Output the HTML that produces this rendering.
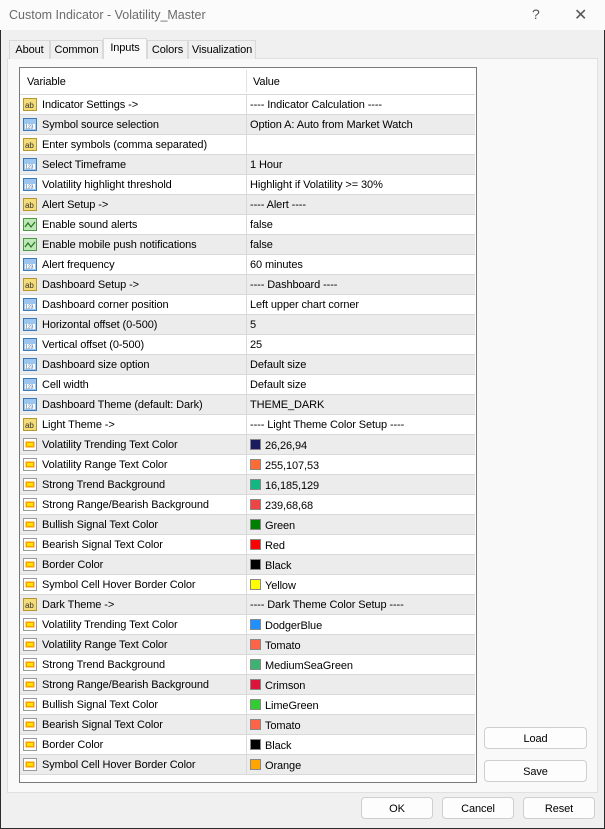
<!DOCTYPE html>
<html><head><style>
*{margin:0;padding:0;box-sizing:border-box}
body{width:605px;height:829px;background:#f0f0f0;font-family:"Liberation Sans",Arial,sans-serif;font-size:11px;letter-spacing:-0.1px;color:#000;position:relative;overflow:hidden}
.win{position:absolute;left:0;top:0;width:605px;height:829px;border:1px solid #2b2b2b;border-top:none}
.title{position:absolute;left:0;top:0;width:605px;height:30px;background:#fbfbfb}
.title span{position:absolute;left:9px;top:8px;font-size:12.5px;color:#6b6b6b;letter-spacing:0}
.tb{position:absolute;top:6px;font-size:14px;color:#555}
.tab{position:absolute;top:40px;height:19px;border:1px solid #d9d9d9;border-bottom:none;background:#f0f0f0;font-size:11px;padding-top:3px;text-align:center}
.panel{position:absolute;left:7px;top:58px;width:591px;height:735px;background:#f9f9f9;border:1px solid #e0e0e0}
.list{position:absolute;left:19px;top:67px;width:458px;height:716px;border:1px solid #7a7a7a;background:#fff;overflow:hidden}
.hdr{position:absolute;left:0;top:0;width:456px;height:25px}
.hdr span{position:absolute;top:8px}
.row{position:absolute;left:0;width:455px;height:20px;border-top:1px solid #d9d9d9}
.row.g{background:#ececec}
.row .n{position:absolute;left:22px;top:4px;white-space:nowrap}
.row .v{position:absolute;left:230px;top:4px;white-space:nowrap}
.row .sep{position:absolute;left:226px;top:0;height:20px;border-left:1px solid #d9d9d9}
.ic{position:absolute;left:3px;top:2px;width:15px;height:15px}
.sw{display:inline-block;width:11px;height:11px;border:1px solid #888;vertical-align:-1px;margin-right:4px}
.btn{position:absolute;height:22px;border:1px solid #cfcfcf;border-radius:4px;background:#fdfdfd;text-align:center;padding-top:5px;font-size:11px}
</style></head><body>
<div class="win"></div>
<div class="title"><span>Custom Indicator - Volatility_Master</span><div class="tb" style="left:532px">?</div><div class="tb" style="left:574px;font-size:16px;top:5px">✕</div></div>
<div class="panel"></div>
<div class="tab" style="left:9px;width:41px">About</div>
<div class="tab" style="left:50px;width:53px">Common</div>
<div class="tab" style="left:103px;width:44px;top:38px;height:21px;background:#f9f9f9;padding-top:3px">Inputs</div>
<div class="tab" style="left:147px;width:41px">Colors</div>
<div class="tab" style="left:188px;width:68px">Visualization</div>
<div class="list">
<div class="hdr"><span style="left:7px">Variable</span><span style="left:233px">Value</span><div style="position:absolute;left:226px;top:2px;height:22px;border-left:1px solid #e0e0e0"></div></div>
<div id="rows"></div>
</div>
<div class="btn" style="left:484px;top:727px;width:103px">Load</div>
<div class="btn" style="left:484px;top:760px;width:103px">Save</div>
<div class="btn" style="left:361px;top:797px;width:72px">OK</div>
<div class="btn" style="left:442px;top:797px;width:72px">Cancel</div>
<div class="btn" style="left:523px;top:797px;width:72px">Reset</div>
<script>
var ab='<svg class="ic" viewBox="0 0 15 15"><rect x="0.5" y="1.5" width="13" height="12" fill="#f3dc7a" stroke="#b8962e"/><text x="2" y="11" font-size="8" font-family="Liberation Sans" fill="#333">ab</text></svg>';
var n='<svg class="ic" viewBox="0 0 15 15"><rect x="0.5" y="1.5" width="13" height="12" fill="#9cc6ee" stroke="#3d78b8"/><rect x="2" y="7" width="10" height="5" fill="#fff"/><text x="2.3" y="11.5" font-size="5" font-family="Liberation Sans" fill="#1c4f8c">123</text></svg>';
var b='<svg class="ic" viewBox="0 0 15 15"><rect x="0.5" y="1.5" width="13" height="12" fill="#bfe8b8" stroke="#4c9a44"/><path d="M2 10 L5 6 L8 10 L12 5" stroke="#2d7a26" fill="none" stroke-width="1.3"/></svg>';
var c='<svg class="ic" viewBox="0 0 15 15"><rect x="0.5" y="1.5" width="13" height="12" fill="#fff" stroke="#999"/><rect x="2.5" y="4.5" width="9" height="6" fill="#f7a000"/><rect x="4" y="6" width="6" height="3" fill="#ffe000"/></svg>';
var R=[[ab,'Indicator Settings ->','---- Indicator Calculation ----'],[n,'Symbol source selection','Option A: Auto from Market Watch'],[ab,'Enter symbols (comma separated)',''],[n,'Select Timeframe','1 Hour'],[n,'Volatility highlight threshold','Highlight if Volatility >= 30%'],[ab,'Alert Setup ->','---- Alert ----'],[b,'Enable sound alerts','false'],[b,'Enable mobile push notifications','false'],[n,'Alert frequency','60 minutes'],[ab,'Dashboard Setup ->','---- Dashboard ----'],[n,'Dashboard corner position','Left upper chart corner'],[n,'Horizontal offset (0-500)','5'],[n,'Vertical offset (0-500)','25'],[n,'Dashboard size option','Default size'],[n,'Cell width','Default size'],[n,'Dashboard Theme (default: Dark)','THEME_DARK'],[ab,'Light Theme ->','---- Light Theme Color Setup ----'],
[c,'Volatility Trending Text Color','26,26,94','#1a1a5e'],[c,'Volatility Range Text Color','255,107,53','#ff6b35'],[c,'Strong Trend Background','16,185,129','#10b981'],[c,'Strong Range/Bearish Background','239,68,68','#ef4444'],[c,'Bullish Signal Text Color','Green','#008000'],[c,'Bearish Signal Text Color','Red','#ff0000'],[c,'Border Color','Black','#000'],[c,'Symbol Cell Hover Border Color','Yellow','#ffff00'],[ab,'Dark Theme ->','---- Dark Theme Color Setup ----'],[c,'Volatility Trending Text Color','DodgerBlue','#1e90ff'],[c,'Volatility Range Text Color','Tomato','#ff6347'],[c,'Strong Trend Background','MediumSeaGreen','#3cb371'],[c,'Strong Range/Bearish Background','Crimson','#dc143c'],[c,'Bullish Signal Text Color','LimeGreen','#32cd32'],[c,'Bearish Signal Text Color','Tomato','#ff6347'],[c,'Border Color','Black','#000'],[c,'Symbol Cell Hover Border Color','Orange','#ffa500']];
var h='';R.forEach(function(r,i){var v=r[3]?'<span class="sw" style="background:'+r[3]+'"></span>'+r[2]:r[2];
h+='<div class="row'+(i%2?' g':'')+'" style="top:'+(26+i*20)+'px">'+r[0]+'<span class="n">'+r[1]+'</span><div class="sep"></div><span class="v">'+v+'</span></div>';});
h+='<div class="row" style="top:'+(26+34*20)+'px"></div>';
document.getElementById('rows').innerHTML=h;
</script>
</body></html>
